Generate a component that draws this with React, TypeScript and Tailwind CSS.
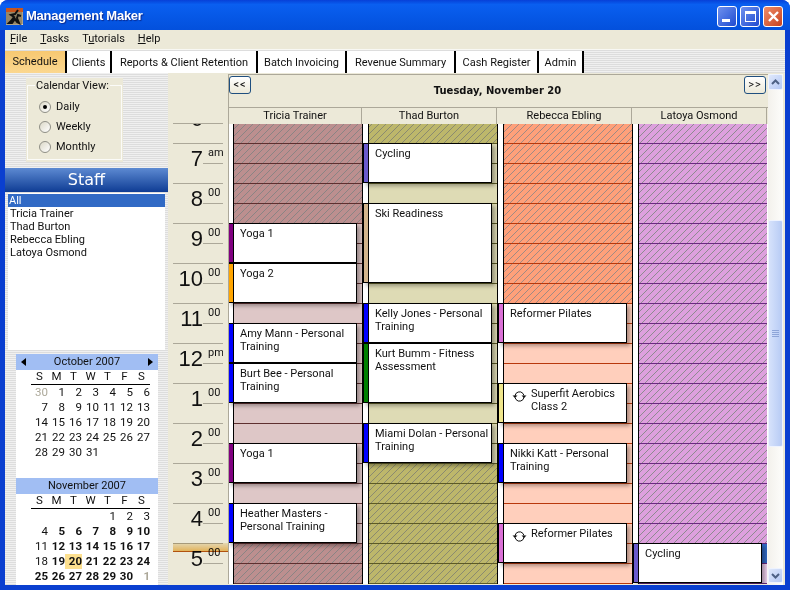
import React from "react";

const HOURS: [string, string][] = [["6","00"],["7","am"],["8","00"],["9","00"],["10","00"],["11","00"],["12","pm"],["1","00"],["2","00"],["3","00"],["4","00"],["5","00"]];
const SLOT_YS = Array.from({ length: 24 }, (_, i) => (i === 0 ? 124 : 143 + (i - 1) * 20));

type Ev = { top: string; h: string; bar: string; lines: string; recur?: boolean };
type Col = { name: string; from: number; to: number; hatch: string; free: string; line: string; outer: string; strip: string; last?: boolean; left: string; events: Ev[] };

const COLS: Col[] = [
  { name: "Tricia Trainer", from: 223, to: 543, outer: "w-[134px]", strip: "w-[4px]", left: "-left-px",
    hatch: "bg-[repeating-linear-gradient(135deg,#bc8f8f_0,#bc8f8f_3.95px,#8a8484_3.95px,#8a8484_4.9497px)] bg-fixed", free: "bg-[#dec7c7]", line: "border-[#5e2f2f]",
    events: [
      { top: "top-[99px]", h: "h-[40px]", bar: "bg-[#800080]", lines: "Yoga 1" },
      { top: "top-[139px]", h: "h-[40px]", bar: "bg-[#ffa500]", lines: "Yoga 2" },
      { top: "top-[199px]", h: "h-[40px]", bar: "bg-[#0000ff]", lines: "Amy Mann - Personal Training" },
      { top: "top-[239px]", h: "h-[40px]", bar: "bg-[#0000ff]", lines: "Burt Bee - Personal Training" },
      { top: "top-[319px]", h: "h-[40px]", bar: "bg-[#800080]", lines: "Yoga 1" },
      { top: "top-[379px]", h: "h-[40px]", bar: "bg-[#0000ff]", lines: "Heather Masters - Personal Training" },
    ] },
  { name: "Thad Burton", from: 143, to: 463, outer: "w-[135px]", strip: "w-[5px]", left: "left-0",
    hatch: "bg-[repeating-linear-gradient(135deg,#bdb76b_0,#bdb76b_3.95px,#8a8a70_3.95px,#8a8a70_4.9497px)] bg-fixed", free: "bg-[#dedbb5]", line: "border-[#5c5a25]",
    events: [
      { top: "top-[19px]", h: "h-[40px]", bar: "bg-[#6a5acd]", lines: "Cycling" },
      { top: "top-[79px]", h: "h-[80px]", bar: "bg-[#d2b48c]", lines: "Ski Readiness" },
      { top: "top-[179px]", h: "h-[40px]", bar: "bg-[#0000ff]", lines: "Kelly Jones - Personal Training" },
      { top: "top-[219px]", h: "h-[60px]", bar: "bg-[#008000]", lines: "Kurt Bumm - Fitness Assessment" },
      { top: "top-[299px]", h: "h-[40px]", bar: "bg-[#0000ff]", lines: "Miami Dolan - Personal Training" },
    ] },
  { name: "Rebecca Ebling", from: 303, to: 999, outer: "w-[135px]", strip: "w-[5px]", left: "left-0",
    hatch: "bg-[repeating-linear-gradient(135deg,#ffa07a_0,#ffa07a_3.95px,#a08a84_3.95px,#a08a84_4.9497px)] bg-fixed", free: "bg-[#ffcfbc]", line: "border-[#b8380c]",
    events: [
      { top: "top-[179px]", h: "h-[40px]", bar: "bg-[#da70d6]", lines: "Reformer Pilates" },
      { top: "top-[259px]", h: "h-[40px]", bar: "bg-[#f0e68c]", lines: "Superfit Aerobics Class 2", recur: true },
      { top: "top-[319px]", h: "h-[40px]", bar: "bg-[#0000ff]", lines: "Nikki Katt - Personal Training" },
      { top: "top-[399px]", h: "h-[40px]", bar: "bg-[#da70d6]", lines: "Reformer Pilates", recur: true },
    ] },
  { name: "Latoya Osmond", from: 543, to: 999, outer: "w-[134px]", strip: "w-[5px]", left: "left-0", last: true,
    hatch: "bg-[repeating-linear-gradient(135deg,#dda0dd_0,#dda0dd_3.95px,#8e8a90_3.95px,#8e8a90_4.9497px)] bg-fixed", free: "bg-[#eed0ee]", line: "border-[#6a2a80]",
    events: [{ top: "top-[419px]", h: "h-[40px]", bar: "bg-[#6a5acd]", lines: "Cycling" }] },
];

const OCT = ["30","1","2","3","4","5","6","7","8","9","10","11","12","13","14","15","16","17","18","19","20","21","22","23","24","25","26","27","28","29","30","31"];
const NOV = ["","","","","1","2","3","4","5","6","7","8","9","10","11","12","13","14","15","16","17","18","19","20","21","22","23","24","25","26","27","28","29","30","1"];
const NOV_PLAIN = new Set([7, 14, 21]);

function Recur() {
  return (
    <svg width="15" height="13" viewBox="0 0 15 13" className="absolute left-[8px] top-[6px]" fill="none" stroke="#111" strokeWidth="1">
      <path d="M3 6 A4.5 4.5 0 0 1 11 3.5 L12 5.5" />
      <path d="M12 7 A4.5 4.5 0 0 1 4 9.5 L3 7.5" />
      <path d="M0.5 5.5 H5.5 L3 8 Z" fill="#111" stroke="none" />
      <path d="M9.5 5.5 H14.5 L12 8 Z" fill="#111" stroke="none" />
    </svg>
  );
}

function MonthCal({ title, arrows, days, nov }: { title: string; arrows?: boolean; days: string[]; nov?: boolean }) {
  return (
    <div>
      <div className="h-[16px] bg-[#a1bef3] flex items-center justify-between px-[5px] leading-[16px] text-[#111]">
        {arrows ? <span className="w-0 h-0 border-y-[4px] border-y-transparent border-r-[5px] border-r-black" /> : <span />}
        <span>{title}</span>
        {arrows ? <span className="w-0 h-0 border-y-[4px] border-y-transparent border-l-[5px] border-l-black" /> : <span />}
      </div>
      <div className="ml-[15px] w-[119px]">
        <div className="grid grid-cols-7 h-[15px] border-b border-black text-center leading-[13px] text-[11.5px]">
          {["S","M","T","W","T","F","S"].map((d, i) => <span key={i}>{d}</span>)}
        </div>
        <div className="grid grid-cols-7 auto-rows-[15px] text-right leading-[15px] text-[11.5px]">
          {days.map((d, i) => {
            const oct30 = !nov && i === 0;
            const last = nov && i === days.length - 1;
            const plain = nov ? i < 7 || NOV_PLAIN.has(i) : true;
            const today = nov && d === "20";
            return (
              <span key={i} className={`${oct30 ? "text-[#aca899]" : last ? "text-[#aca899] font-bold" : plain ? "" : "font-bold"} ${today ? "bg-[#fde08f]" : ""}`}>{d}</span>
            );
          })}
        </div>
      </div>
    </div>
  );
}

function Tab({ w, label, active }: { w: string; label: string; active?: boolean }) {
  return (
    <div className={`${w} h-[22px] border-r-2 border-black text-center ${active ? "bg-gradient-to-b from-[#f7c871] to-[#fbd78f] leading-[21px]" : "bg-white leading-[24px]"}`}>{label}</div>
  );
}

function Radio({ label, on }: { label: string; on?: boolean }) {
  return (
    <div className="flex items-center h-[20px]">
      <span className="w-[12px] h-[12px] rounded-full border border-[#8f8f86] bg-gradient-to-br from-[#dcd9c8] to-white flex items-center justify-center">
        {on && <span className="w-[4px] h-[4px] rounded-full bg-black" />}
      </span>
      <span className="ml-[5px]">{label}</span>
    </div>
  );
}

function WinBtn({ cls, children }: { cls: string; children: React.ReactNode }) {
  return <div className={`w-[20px] h-[21px] rounded-[3px] border border-white flex items-center justify-center ${cls}`}>{children}</div>;
}

const NAV = "w-[22px] h-[18px] rounded-[3px] border border-[#1f4f7f] bg-gradient-to-b from-white to-[#ece9d8] text-[11px] leading-[15px] text-center tracking-[1px]";
const STRIPES = "bg-[repeating-linear-gradient(0deg,#dddddd_0,#dddddd_1px,#f0f0f0_1px,#f0f0f0_2px)]";

export default function App() {
  return (
    <div className="w-[790px] h-[590px] overflow-hidden bg-white font-['Roboto',sans-serif] text-[11px] text-[#111]">
      <div className="h-full rounded-t-[8px] bg-[#0a3fd0] flex flex-col">
        <div className="h-[30px] shrink-0 rounded-t-[8px] bg-gradient-to-b from-[#0840d8] via-[#0a5ff0] via-15% to-[#0350dc] flex items-center pt-[2px] pl-[6px] pr-[7px]">
          <svg width="17" height="17" viewBox="0 0 17 17">
            <rect width="17" height="17" fill="#e0d4bc" />
            <rect width="17" height="4" fill="#c8561e" />
            <path d="M0 5H17M0 7H17M0 9H17M0 11H17M0 13H17M0 15H17M1 4V17M3 4V17M5 4V17M7 4V17M9 4V17M11 4V17M13 4V17M15 4V17" stroke="#6b5a3a" strokeWidth="0.8" />
            <path d="M12 2L9 6L5 7L8 9L5 13L3 15L6 15L9 11L11 14L13 15L11 10L12 7L15 8" fill="none" stroke="#111" strokeWidth="2" />
          </svg>
          <span className="ml-[3px] font-['Liberation_Sans',sans-serif] text-white font-bold text-[13px] tracking-[-0.25px] [text-shadow:1px_1px_1px_#0a2a90]">Management Maker</span>
          <div className="ml-auto flex gap-[3px]">
            <WinBtn cls="bg-gradient-to-br from-[#6f90ee] to-[#1f49d0]"><span className="w-[8px] h-[3px] bg-white mt-[9px] mr-[3px]" /></WinBtn>
            <WinBtn cls="bg-gradient-to-br from-[#6f90ee] to-[#1f49d0]"><span className="w-[11px] h-[11px] border border-white border-t-[3px]" /></WinBtn>
            <WinBtn cls="bg-gradient-to-br from-[#ee8c68] to-[#c8401a]">
              <svg width="13" height="13" viewBox="0 0 13 13"><path d="M2 2L11 11M11 2L2 11" stroke="white" strokeWidth="2.4" /></svg>
            </WinBtn>
          </div>
        </div>

        <div className="mx-[5px] h-[555px] shrink-0 bg-[#ece9d8] flex flex-col overflow-hidden">
          <div className="h-[20px] border-b border-[#f8f8f4] flex items-center pl-[5px] gap-[13px] shrink-0">
            <span><u>F</u>ile</span><span><u>T</u>asks</span><span>T<u>u</u>torials</span><span><u>H</u>elp</span>
          </div>
          <div className={`h-[23px] shrink-0 flex items-start pt-px ${STRIPES}`}>
            <Tab w="w-[62px]" label="Schedule" active />
            <Tab w="w-[45px]" label="Clients" />
            <Tab w="w-[146px]" label="Reports & Client Retention" />
            <Tab w="w-[89px]" label="Batch Invoicing" />
            <Tab w="w-[109px]" label="Revenue Summary" />
            <Tab w="w-[83px]" label="Cash Register" />
            <Tab w="w-[45px]" label="Admin" />
          </div>

          <div className="flex h-[512px] shrink-0">
            <div className={`w-[163px] shrink-0 ${STRIPES} overflow-hidden`}>
              <div className="ml-[21px] mt-[5px] w-[97px] h-[84px] bg-[#ece9d8] pt-[1px]">
                <fieldset className="mx-px w-[95px] h-[81px] border border-[#fbfbf8] pl-[11px]">
                  <legend className="ml-[-4px] px-[1px] leading-[13px] whitespace-nowrap">Calendar View:</legend>
                  <div className="mt-[5px]">
                    <Radio label="Daily" on />
                    <Radio label="Weekly" />
                    <Radio label="Monthly" />
                  </div>
                </fieldset>
              </div>
              <div className="mt-[6px] h-[24px] bg-gradient-to-b from-[#5d8ad2] to-[#0e3c94] text-white text-center font-['DejaVu_Sans',sans-serif] text-[16px] leading-[24px]">Staff</div>
              <div className="mx-[3px] mt-px h-[157px] bg-white pt-px">
                <div className="h-[13px] leading-[14px] bg-[#316ac5] text-white pl-px">All</div>
                <div className="h-[13px] leading-[14px] pl-[2px]">Tricia Trainer</div>
                <div className="h-[13px] leading-[14px] pl-[2px]">Thad Burton</div>
                <div className="h-[13px] leading-[14px] pl-[2px]">Rebecca Ebling</div>
                <div className="h-[13px] leading-[14px] pl-[2px]">Latoya Osmond</div>
              </div>
              <div className="ml-[11px] mt-[4px] w-[142px] h-[240px] bg-white">
                <div className="h-[124px]"><MonthCal title="October 2007" arrows days={OCT} /></div>
                <MonthCal title="November 2007" days={NOV} nov />
              </div>
            </div>

            <div className="w-[60px] shrink-0 relative pt-[50px] overflow-hidden">
              <div className="ml-[5px] w-[50px] h-[461px] border-t border-[#aca899] overflow-hidden">
                <div className="-mt-[21px]">
                  {HOURS.map(([h, s], i) => (
                    <div key={i} className="h-[40px] border-t border-[#aca899] flex">
                      <div className="w-[30px] text-right font-['Liberation_Sans',sans-serif] text-[22px] leading-[28px] pt-[1px]">{h}</div>
                      <div className="w-[20px] h-[20px] border-b border-[#aca899] text-[11px] leading-[12px] pl-[5px] pt-[3px]">{s}</div>
                    </div>
                  ))}
                </div>
              </div>
              <div className="absolute left-[5px] top-[470px] w-[55px] h-[9px] bg-gradient-to-b from-[#f6ecd2] to-[#f5c468] border-b border-[#c05a10] mix-blend-multiply" />
            </div>

            <div className="w-[540px] shrink-0 flex flex-col">
              <div className="h-[50px] shrink-0 border-t border-l border-[#aca899] mt-px flex flex-col">
                <div className="h-[32px] flex items-start justify-between pt-[1px] pr-[1px] relative">
                  <div className={NAV}>&lt;&lt;</div>
                  <div className="absolute inset-x-0 top-[9px] text-center font-['DejaVu_Sans',sans-serif] font-bold text-[10px] leading-[14px] pr-[2px]">Tuesday, November 20</div>
                  <div className={`${NAV} mr-px`}>&gt;&gt;</div>
                </div>
                <div className="h-[17px] border-t border-[#aca899] flex leading-[16px] text-center">
                  <div className="w-[133px] border-r border-[#aca899]">Tricia Trainer</div>
                  <div className="w-[135px] border-r border-[#aca899]">Thad Burton</div>
                  <div className="w-[135px] border-r border-[#aca899]">Rebecca Ebling</div>
                  <div className="w-[135px] border-r border-[#aca899]">Latoya Osmond</div>
                </div>
              </div>
              <div className="h-[460px] shrink-0 flex border-l border-[#aca899] bg-white overflow-hidden">
                {COLS.map((c) => (
                  <div key={c.name} className={`${c.outer} relative flex shrink-0 h-full`}>
                    <div className={`${c.strip} shrink-0 bg-white`} />
                    <div className={`flex-1 border-l border-black ${c.last ? "" : "border-r"}`}>
                      {SLOT_YS.map((y, i) => {
                        const isFree = y >= c.from && y < c.to;
                        const sel = c.last && y === 543;
                        return (
                          <div
                            key={y}
                            className={`${i === 0 ? "h-[19px]" : `h-[20px] border-t ${c.line}`} ${sel ? "bg-[#316ac5]" : isFree ? c.free : c.hatch}`}
                          />
                        );
                      })}
                    </div>
                    {c.events.map((e, i) => (
                      <div key={i} className={`absolute ${c.left} ${e.top} ${e.h} w-[129px] flex border border-black bg-white shadow-[3px_3px_4px_rgba(0,0,0,0.32)]`}>
                        <div className={`w-[4px] shrink-0 ${e.bar}`} />
                        <div className={`relative flex-1 border-l border-black leading-[13px] pt-[3px] ${e.recur ? "pl-[27px]" : "pl-[6px]"}`}>
                          {e.recur && <Recur />}
                          {e.lines}
                        </div>
                      </div>
                    ))}
                  </div>
                ))}
              </div>
            </div>

            <div className="w-[15px] shrink-0 mt-px h-[511px] bg-gradient-to-r from-[#f3f1ec] to-[#fdfdfb] flex flex-col items-center relative">
              <div className="w-[15px] h-[16px] rounded-[2px] bg-gradient-to-br from-[#dfe8fb] to-[#b4c8f5] border border-[#eef3fe] flex items-center justify-center">
                <svg width="9" height="6" viewBox="0 0 9 6"><path d="M1 5L4.5 1.5L8 5" fill="none" stroke="#4d6185" strokeWidth="2" /></svg>
              </div>
              <div className="w-[15px] h-[227px] mt-[130px] rounded-[2px] bg-gradient-to-r from-[#d6e2fb] to-[#b7cbf5] border border-[#eef3fe] flex flex-col items-center justify-center gap-px">
                <span className="w-[7px] h-px bg-[#8ea5d8]" />
                <span className="w-[7px] h-px bg-[#8ea5d8]" />
                <span className="w-[7px] h-px bg-[#8ea5d8]" />
                <span className="w-[7px] h-px bg-[#8ea5d8]" />
              </div>
              <div className="w-[15px] h-[15px] mt-auto mb-[2px] rounded-[2px] bg-gradient-to-br from-[#dfe8fb] to-[#b4c8f5] border border-[#eef3fe] flex items-center justify-center">
                <svg width="9" height="6" viewBox="0 0 9 6"><path d="M1 1L4.5 4.5L8 1" fill="none" stroke="#4d6185" strokeWidth="2" /></svg>
              </div>
            </div>
          </div>
        </div>
      </div>
    </div>
  );
}
